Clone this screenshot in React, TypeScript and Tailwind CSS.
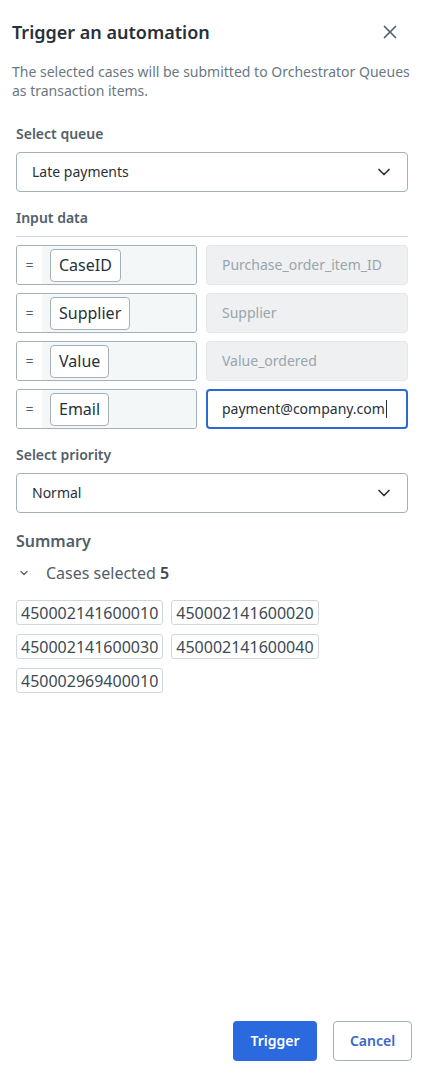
import { X, ChevronDown } from "lucide-react";

const mappings = [
  { source: "CaseID", target: "Purchase_order_item_ID" },
  { source: "Supplier", target: "Supplier" },
  { source: "Value", target: "Value_ordered" },
];

const cases = [
  "450002141600010",
  "450002141600020",
  "450002141600030",
  "450002141600040",
  "450002969400010",
];

const SelectBox = ({ value }: { value: string }) => (
  <div className="flex h-10 items-center justify-between rounded border border-[#a4b1b8] bg-white pl-[15px] pr-[13px]">
    <span className="text-sm text-[#273139]">{value}</span>
    <ChevronDown size={20} strokeWidth={2} className="text-[#273139]" />
  </div>
);

const MappingRow = ({ source, children }: { source: string; children: React.ReactNode }) => (
  <div className="grid grid-cols-[181px_1fr] gap-[9px]">
    <div className="flex h-10 items-stretch overflow-hidden rounded-[3px] border border-[#a4b1b8]">
      <span className="flex w-[25px] items-center justify-center bg-white text-sm text-[#526069]">=</span>
      <div className="flex flex-1 items-center bg-[#f4f7f8] pl-2">
        <span className="flex h-[33px] items-center rounded border border-[#a4b1b8] bg-white px-2 text-base text-[#273139]">
          {source}
        </span>
      </div>
    </div>
    {children}
  </div>
);

export default function App() {
  return (
    <div className="flex min-h-[1084px] flex-col bg-white font-['Noto_Sans',sans-serif] text-[#273139]">
      <div className="flex items-center justify-between pl-3 pr-5 pt-5">
        <h1 className="text-lg font-semibold leading-6">Trigger an automation</h1>
        <X size={22} strokeWidth={1.8} className="text-[#526069]" />
      </div>
      <p className="mt-[18px] pl-3 pr-1 text-sm leading-[19px] text-[#6b7882]">
        The selected cases will be submitted to Orchestrator Queues as transaction items.
      </p>

      <div className="mt-6 flex flex-col px-4 pr-[13px]">
        <label className="text-sm font-semibold leading-5 text-[#526069]">Select queue</label>
        <div className="mt-2">
          <SelectBox value="Late payments" />
        </div>

        <label className="mt-4 text-sm font-semibold leading-5 text-[#526069]">Input data</label>
        <div className="mt-2 border-t border-[#cfd8dd]" />
        <div className="mt-2 flex flex-col gap-2">
          {mappings.map((m) => (
            <MappingRow key={m.source} source={m.source}>
              <div className="flex h-10 items-center rounded border border-[#e3e7ea] bg-[#eef0f1] px-[15px] text-sm text-[#9aa5ad]">
                {m.target}
              </div>
            </MappingRow>
          ))}
          <MappingRow source="Email">
            <div className="flex h-10 items-center rounded border-2 border-[#2e69d1] bg-white px-[14px] text-sm text-[#273139]">
              payment@company.com
              <span className="ml-px h-[18px] w-px bg-[#273139]" />
            </div>
          </MappingRow>
        </div>

        <label className="mt-4 text-sm font-semibold leading-5 text-[#526069]">Select priority</label>
        <div className="mt-2">
          <SelectBox value="Normal" />
        </div>

        <h2 className="mt-4 text-base font-semibold leading-6 text-[#526069]">Summary</h2>
        <div className="mt-2 flex items-center gap-4 pl-[2px] text-base leading-6 text-[#526069]">
          <ChevronDown size={12} strokeWidth={2.5} />
          <span>
            Cases selected <span className="font-semibold text-[#3d4a53]">5</span>
          </span>
        </div>
        <div className="mt-[15px] flex w-[310px] flex-wrap gap-x-2 gap-y-[9px]">
          {cases.map((c) => (
            <span
              key={c}
              className="flex h-[25px] items-center rounded-[3px] border border-[#cfd8dd] px-1 text-base text-[#3d4a53]"
            >
              {c}
            </span>
          ))}
        </div>
      </div>

      <div className="mt-auto flex justify-end gap-4 pb-[23px] pr-[9px]">
        <button className="h-10 w-[84px] rounded bg-[#2a6ade] text-sm font-semibold text-white">Trigger</button>
        <button className="h-10 w-[79px] rounded border border-[#a4b1b8] bg-white text-sm font-semibold text-[#3a66cc]">
          Cancel
        </button>
      </div>
    </div>
  );
}
